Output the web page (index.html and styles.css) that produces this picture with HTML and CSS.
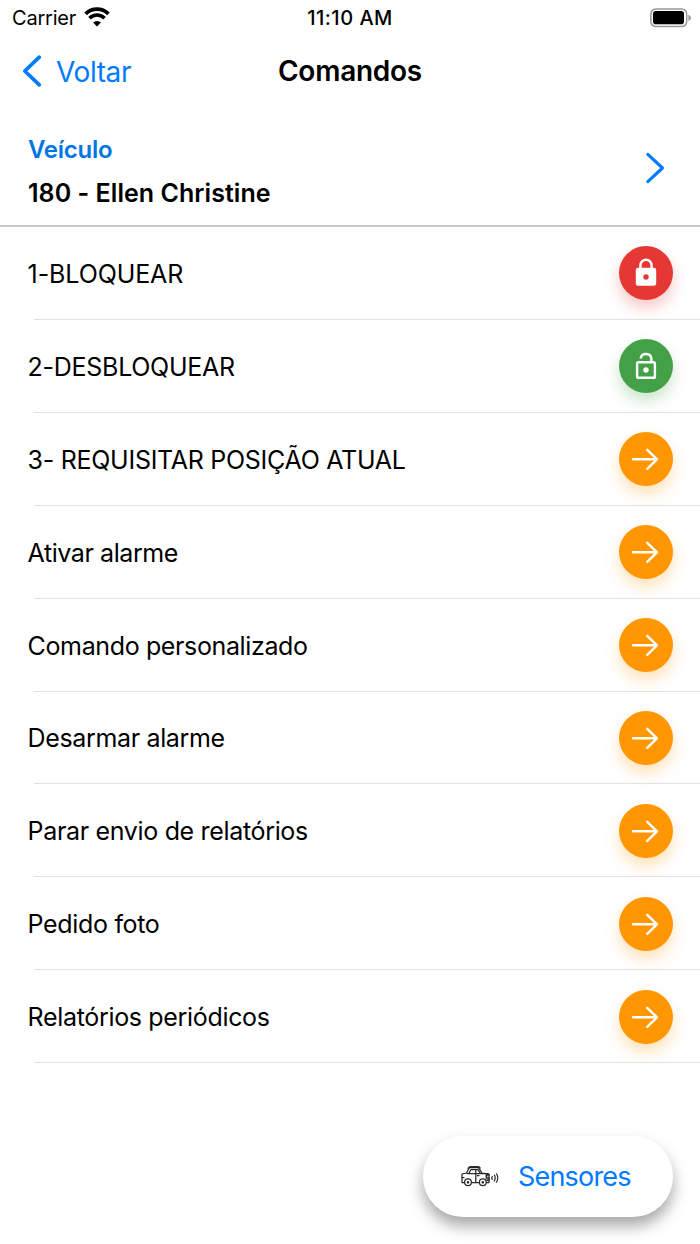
FILE: index.html
```html
<!DOCTYPE html>
<html lang="pt">
<head>
<meta charset="utf-8">
<title>Comandos</title>
<link rel="stylesheet" href="styles.css">
</head>
<body>
<svg class="defs" width="0" height="0" aria-hidden="true">
  <symbol id="arrow" viewBox="0 0 54 54"><path d="M14 27.3H38M28.2 17.8L38 27.3L28.2 36.8" fill="none" stroke="#fff" stroke-width="2.4" stroke-linecap="round" stroke-linejoin="round"/></symbol>
</svg>
<header class="status">
  <div class="status-left"><span class="carrier">Carrier</span>
    <svg class="wifi" width="26" height="20" viewBox="0 0 26 20"><g fill="none" stroke="#000"><path d="M1.6 6.8A16.3 16.3 0 0 1 24.4 6.8" stroke-width="3.8"/><path d="M5.5 11.2A10.5 10.5 0 0 1 20.5 11.2" stroke-width="3.5"/></g><path d="M13 19.4L9.1 15.5A5.5 5.5 0 0 1 16.9 15.5Z"/></svg>
  </div>
  <span class="clock">11:10 AM</span>
  <svg class="battery" width="42" height="20" viewBox="0 0 42 20"><rect x=".9" y=".9" width="35.8" height="17.7" rx="5" fill="#fff" stroke="#999" stroke-width="1.5"/><rect x="3" y="3" width="31" height="13.2" rx="2.8"/><path d="M38.4 6.7Q41 7.6 41 9.8T38.4 12.9Z" fill="#999"/></svg>
</header>
<nav class="nav">
  <a class="back"><svg width="20" height="34" viewBox="0 0 20 34"><path d="M17.3 3.2L2.8 17L17.3 30.8" fill="none" stroke="#007aff" stroke-width="3.7" stroke-linecap="round" stroke-linejoin="round"/></svg><span class="back-label">Voltar</span></a>
  <h1 class="title">Comandos</h1>
</nav>
<section class="vehicle">
  <div class="vehicle-info"><span class="vehicle-label">Veículo</span><span class="vehicle-name">180 - Ellen Christine</span></div>
  <svg width="20" height="34" viewBox="0 0 20 34"><path d="M2.8 3.3L17.5 17L2.8 30.7" fill="none" stroke="#007aff" stroke-width="3.1" stroke-linecap="round" stroke-linejoin="round"/></svg>
</section>
<ul class="list">
  <li class="row"><span class="t1">1-BLOQUEAR</span><i class="btn red"><svg width="54" height="54" viewBox="0 0 54 54"><path d="M21.4 24V19.3A5.6 5.6 0 0 1 32.6 19.3V24" fill="none" stroke="#fff" stroke-width="2.4"/><path fill="#fff" fill-rule="evenodd" d="M19.2 21.8H34.8A2.4 2.4 0 0 1 37.2 24.2V37.4A2.4 2.4 0 0 1 34.8 39.8H19.2A2.4 2.4 0 0 1 16.8 37.4V24.2A2.4 2.4 0 0 1 19.2 21.8ZM27 28.3A2.7 2.7 0 1 0 27 33.7A2.7 2.7 0 0 0 27 28.3Z"/></svg></i></li>
  <li class="row"><span class="t2">2-DESBLOQUEAR</span><i class="btn green"><svg width="54" height="54" viewBox="0 0 54 54"><path d="M21.6 19.5A5.5 5.5 0 0 1 32.4 19.5V23" fill="none" stroke="#fff" stroke-width="2.4"/><rect x="18.1" y="23.2" width="17.8" height="15.6" rx="1.4" fill="none" stroke="#fff" stroke-width="2.4"/><circle cx="27" cy="31" r="2.7" fill="#fff"/></svg></i></li>
  <li class="row"><span class="t3">3- REQUISITAR POSIÇÃO ATUAL</span><i class="btn"><svg width="54" height="54"><use href="#arrow"/></svg></i></li>
  <li class="row"><span class="t4">Ativar alarme</span><i class="btn"><svg width="54" height="54"><use href="#arrow"/></svg></i></li>
  <li class="row"><span class="t5">Comando personalizado</span><i class="btn"><svg width="54" height="54"><use href="#arrow"/></svg></i></li>
  <li class="row"><span class="t6">Desarmar alarme</span><i class="btn"><svg width="54" height="54"><use href="#arrow"/></svg></i></li>
  <li class="row"><span class="t7">Parar envio de relatórios</span><i class="btn"><svg width="54" height="54"><use href="#arrow"/></svg></i></li>
  <li class="row"><span class="t8">Pedido foto</span><i class="btn"><svg width="54" height="54"><use href="#arrow"/></svg></i></li>
  <li class="row"><span class="t9">Relatórios periódicos</span><i class="btn"><svg width="54" height="54"><use href="#arrow"/></svg></i></li>
</ul>
<a class="sensors">
  <svg width="38" height="22" viewBox="0 0 38 22"><g fill="none" stroke="#2a2a2a" stroke-width="1.25" stroke-linejoin="round" stroke-linecap="round"><path d="M3.3 17.5H1V9L5.5 8L8.3 2.7H17.5L21 8L28 9V17.5H25.5M10.8 17.5H18"/><path d="M7 3.3L9.2 1.5H17.5L19.2 3M6 8.5H27M14.8 4.7V17M8 8.2L9.8 4.7H17L19.2 8.2M16.5 10.7H18M1 12.5H3"/><circle cx="7" cy="17.3" r="3.4"/><circle cx="21.8" cy="17.3" r="3.4"/><circle cx="7" cy="17.3" r=".7"/><circle cx="21.8" cy="17.3" r=".7"/><path d="M28 9.8H25.4V13H28M28 15.2H26" stroke-width="1.7"/><path d="M31.3 11.5Q30.4 13 31.3 14.5M33.4 10.1Q35 13 33.4 15.9M35.5 8.8Q38 13 35.5 17.2" stroke-width="1.2"/></g></svg>
  <span class="sensors-label">Sensores</span>
</a>
</body>
</html>
```
FILE: styles.css
```css
* { box-sizing: border-box; }
body { margin: 0; width: 700px; height: 1244px; overflow: hidden; position: relative; background: #fff; color: #000; font-family: Inter, "Liberation Sans", sans-serif; }
.defs { position: absolute; }
svg { display: block; flex: none; }
span { white-space: nowrap; }
.status { height: 36px; display: grid; grid-template-columns: 1fr auto 1fr; align-items: center; padding: 0 8px 0 12px; font-size: 20px; line-height: 36px; }
.status-left { display: flex; align-items: center; gap: 8px; }
.carrier { letter-spacing: -.2px; }
.wifi { margin: -2px 0 0 0; }
.clock { font-weight: 500; letter-spacing: .5px; padding-right: 4px; }
.battery { justify-self: end; margin-top: -1px; }
.nav { height: 70px; display: grid; grid-template-columns: 1fr auto 1fr; align-items: center; padding-left: 22px; }
.back { display: flex; align-items: center; gap: 14px; color: #007aff; font-size: 28px; letter-spacing: -.4px; }
.back-label { padding-top: 1px; }
.title { margin: 0; font-size: 28px; font-weight: 600; letter-spacing: -.25px; padding: 0 22px 0 0; }
.vehicle { height: 121px; border-bottom: 2px solid #c8c8c8; padding: 22px 35px 0 28px; display: flex; justify-content: space-between; }
.vehicle-info { display: flex; flex-direction: column; font-weight: 600; font-size: 24px; line-height: 43px; }
.vehicle-label { color: #0075e6; letter-spacing: -.25px; }
.vehicle-name { font-size: 25px; letter-spacing: .05px; padding-top: 1px; }
.vehicle > svg { margin-top: 23px; }
.list { list-style: none; margin: 0; padding: .3px 0 0; }
.row { height: 92.9px; padding: 0 27.3px 0 27.6px; display: flex; align-items: center; justify-content: space-between; font-size: 25px; background: linear-gradient(#e2e2e2, #e2e2e2) right bottom / 666px 1.2px no-repeat; }
.row > span { padding-top: .4px; }
.t1 { letter-spacing: -.1px; }
.t2, .t3 { letter-spacing: -.28px; }
.t4 { letter-spacing: -.42px; }
.t5 { letter-spacing: -.37px; }
.t6 { letter-spacing: -.35px; }
.t7, .t8, .t9 { letter-spacing: -.33px; }
.btn { width: 54px; height: 54px; margin-top: -.6px; border-radius: 50%; background: #ff9602; box-shadow: 0 8px 15px rgba(255, 150, 2, .28); }
.red { background: #e53835; box-shadow: 0 8px 15px rgba(229, 56, 53, .28); }
.green { background: #43a047; box-shadow: 0 8px 15px rgba(67, 160, 71, .28); }
.sensors { position: absolute; left: 423px; top: 1136px; width: 250px; height: 80.5px; border-radius: 40px; background: #fff; box-shadow: 0 9px 15px rgba(0, 0, 0, .35); display: flex; align-items: center; padding-left: 38px; gap: 19px; color: #007aff; font-size: 27px; letter-spacing: -.8px; }
```
